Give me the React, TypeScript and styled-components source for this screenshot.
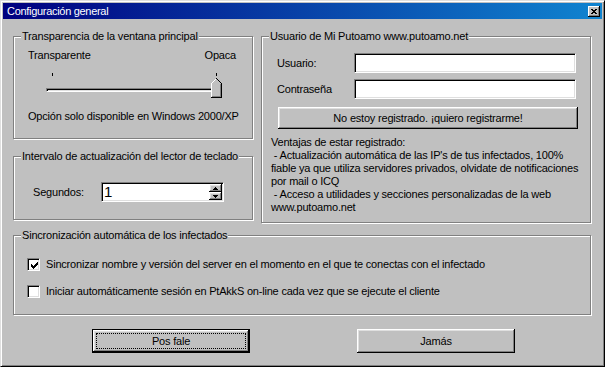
import React from "react";
import styled, { createGlobalStyle, css } from "styled-components";

const GlobalStyle = createGlobalStyle`
  html, body { margin: 0; padding: 0; background: #c0c0c0; }
  *, *::before, *::after { box-sizing: border-box; }
`;

const FONT = `"Liberation Sans", Arial, sans-serif`;

const raised = css`
  background: #c0c0c0;
  box-shadow: inset -1px -1px #000, inset 1px 1px #fff, inset -2px -2px #808080,
    inset 2px 2px #dfdfdf;
`;

const sunken = css`
  border: 1px solid;
  border-color: #808080 #fff #fff #808080;
  box-shadow: inset 1px 1px #000, inset -1px -1px #dfdfdf;
  background: #fff;
`;

const Window = styled.div`
  width: 605px;
  height: 367px;
  display: flex;
  flex-direction: column;
  padding: 2px;
  background: #c0c0c0;
  border: 1px solid;
  border-color: #dfdfdf #000 #000 #dfdfdf;
  box-shadow: inset 1px 1px #fff, inset -1px -1px #808080;
  font-family: ${FONT};
  font-size: 11px;
  line-height: 13px;
  letter-spacing: -0.2px;
  white-space: nowrap;
  color: #000;
`;

const TitleBar = styled.div`
  flex: none;
  height: 16px;
  display: flex;
  align-items: center;
  justify-content: space-between;
  padding: 0 2px 0 4px;
  background: linear-gradient(to right, #000080, #1084d0);
  color: #fff;
`;

const TitleText = styled.span`
  font-size: 11px;
  letter-spacing: -0.3px;
`;

const CloseButton = styled.div`
  width: 12px;
  height: 11px;
  display: flex;
  align-items: center;
  justify-content: center;
  background: #c0c0c0;
  box-shadow: inset -1px -1px #000, inset 1px 1px #fff, inset -2px -2px #808080;
  svg { display: block; }
`;

const Body = styled.div`
  flex: 1;
  display: flex;
  flex-direction: column;
  padding: 11px 0 0 10px;
`;

const TopGrid = styled.div`
  display: grid;
  grid-template-columns: 240px 330px;
  column-gap: 8px;
  height: 193px;
`;

const LeftColumn = styled.div`
  display: flex;
  flex-direction: column;
  gap: 11px;
`;

const Group = styled.fieldset<{ $h: number }>`
  margin: 0;
  padding: 0;
  min-width: 0;
  height: ${(p) => p.$h}px;
  border: 1px solid #808080;
  box-shadow: inset 1px 1px #fff, 1px 1px #fff;
`;

const Legend = styled.legend`
  margin-left: 7px;
  padding: 0 1px;
  line-height: 13px;
  background: #c0c0c0;
`;

/* Transparency group */
const TransparencyBody = styled.div`
  display: flex;
  flex-direction: column;
  padding: 6px 16px 0 14px;
`;

const ScaleLabels = styled.div`
  display: flex;
  justify-content: space-between;
  height: 13px;
`;

const Slider = styled.div`
  position: relative;
  margin: 10px 0 0 18px;
  width: 176px;
  height: 26px;
`;

const Tick = styled.div`
  position: absolute;
  top: 1px;
  width: 1px;
  height: 3px;
  background: #000;
`;

const Track = styled.div`
  margin-top: 16px;
  width: 100%;
  height: 4px;
  border: 1px solid;
  border-color: #808080 #fff #fff #808080;
  box-shadow: inset 1px 1px #000, inset -1px -1px #dfdfdf;
`;

const Thumb = styled.svg`
  position: absolute;
  left: 165px;
  top: 6px;
`;

const Note = styled.div`
  margin-top: 12px;
`;

/* Interval group */
const IntervalBody = styled.div`
  display: flex;
  align-items: center;
  padding: 19px 0 0 19px;
`;

const FieldLabel = styled.span<{ $w: number }>`
  width: ${(p) => p.$w}px;
  flex: none;
`;

const SpinEdit = styled.div`
  ${sunken};
  width: 123px;
  height: 20px;
  display: flex;
  padding: 1px;
`;

const SpinValue = styled.span`
  flex: 1;
  padding-left: 1px;
  font-size: 15px;
  line-height: 16px;
  letter-spacing: 0;
`;

const SpinButtons = styled.div`
  width: 13px;
  display: flex;
  flex-direction: column;
`;

const SpinButton = styled.div`
  ${raised};
  flex: 1;
  display: flex;
  align-items: center;
  justify-content: center;
  svg { display: block; }
`;

/* User group */
const UserBody = styled.div`
  display: flex;
  flex-direction: column;
  padding: 10px 0 0 9px;
`;

const FormRow = styled.div<{ $gap: number }>`
  display: flex;
  align-items: center;
  margin: ${(p) => p.$gap}px 0 0 6px;
`;

const TextInput = styled.div`
  ${sunken};
  width: 222px;
  height: 20px;
`;

const PushButton = styled.button<{ $default?: boolean }>`
  ${raised};
  width: 158px;
  height: 24px;
  padding: 0;
  border: none;
  font: inherit;
  letter-spacing: inherit;
  color: #000;
  display: flex;
  align-items: center;
  justify-content: center;
  ${(p) =>
    p.$default &&
    css`
      border: 1px solid #000;
      padding: 3px;
      align-items: stretch;
      justify-content: stretch;
    `}
`;

const RegisterButton = styled(PushButton)`
  width: 300px;
  height: 22px;
  margin: 8px 0 0 7px;
`;

const FocusRect = styled.span`
  flex: 1;
  display: flex;
  align-items: center;
  justify-content: center;
  border: 1px dotted #000;
`;

const Info = styled.div`
  margin-top: 7px;
  white-space: pre;
`;

/* Sync group */
const SyncBody = styled.div`
  display: flex;
  flex-direction: column;
  gap: 14px;
  padding: 16px 0 0 13px;
`;

const CheckRow = styled.label`
  display: flex;
  align-items: center;
  height: 13px;
`;

const CheckBox = styled.span`
  ${sunken};
  width: 13px;
  height: 13px;
  flex: none;
  position: relative;
  svg { position: absolute; left: 2px; top: 2px; display: block; }
`;

const CheckText = styled.span`
  margin-left: 6px;
`;

const ButtonRow = styled.div`
  display: flex;
  gap: 107px;
  margin-top: 14px;
  padding-left: 79px;
`;

const CHECK_STARTS = [2, 3, 4, 3, 2, 1, 0];

const CheckMark = () => (
  <svg width="9" height="9" viewBox="0 0 9 9" shapeRendering="crispEdges">
    <path
      fill="#000"
      d={CHECK_STARTS.map((s, i) => `M${i + 1} ${s + 1}h1v3h-1z`).join(" ")}
    />
  </svg>
);

const CloseGlyph = () => (
  <svg width="6" height="5" viewBox="0 0 6 5" shapeRendering="crispEdges">
    <path
      fill="#000"
      d="M0 0h2v1h-2z M4 0h2v1h-2z M1 1h4v1h-4z M2 2h2v1h-2z M1 3h4v1h-4z M0 4h2v1h-2z M4 4h2v1h-2z"
    />
  </svg>
);

const Arrow = ({ up }: { up?: boolean }) => (
  <svg width="5" height="3" viewBox="0 0 5 3" shapeRendering="crispEdges">
    <path
      fill="#000"
      d={up ? "M2 0h1v1h1v1h1v1h-5v-1h1v-1h1z" : "M0 0h5v1h-1v1h-1v1h-1v-1h-1v-1h-1z"}
    />
  </svg>
);

export default function App() {
  return (
    <>
      <GlobalStyle />
      <Window>
        <TitleBar>
          <TitleText>Configuración general</TitleText>
          <CloseButton>
            <CloseGlyph />
          </CloseButton>
        </TitleBar>
        <Body>
          <TopGrid>
            <LeftColumn>
              <Group $h={109}>
                <Legend>Transparencia de la ventana principal</Legend>
                <TransparencyBody>
                  <ScaleLabels>
                    <span>Transparente</span>
                    <span>Opaca</span>
                  </ScaleLabels>
                  <Slider>
                    <Tick style={{ left: 6 }} />
                    <Tick style={{ left: 170 }} />
                    <Track />
                    <Thumb width="11" height="20" viewBox="0 0 11 20" shapeRendering="crispEdges">
                      <path d="M0 5 L5 0 L10 5 V19 H0 Z" fill="#c0c0c0" />
                      <path d="M0.5 19 V5.5 L5.5 0.5" stroke="#fff" fill="none" />
                      <path d="M5.5 0.5 L10.5 5.5 V19.5 H0" stroke="#000" fill="none" />
                      <path d="M9.5 6 V18.5 H1" stroke="#808080" fill="none" />
                    </Thumb>
                  </Slider>
                  <Note>Opción solo disponible en Windows 2000/XP</Note>
                </TransparencyBody>
              </Group>
              <Group $h={70}>
                <Legend>Intervalo de actualización del lector de teclado</Legend>
                <IntervalBody>
                  <FieldLabel $w={68}>Segundos:</FieldLabel>
                  <SpinEdit>
                    <SpinValue>1</SpinValue>
                    <SpinButtons>
                      <SpinButton>
                        <Arrow up />
                      </SpinButton>
                      <SpinButton>
                        <Arrow />
                      </SpinButton>
                    </SpinButtons>
                  </SpinEdit>
                </IntervalBody>
              </Group>
            </LeftColumn>
            <Group $h={193}>
              <Legend>Usuario de Mi Putoamo www.putoamo.net</Legend>
              <UserBody>
                <FormRow $gap={0}>
                  <FieldLabel $w={77}>Usuario:</FieldLabel>
                  <TextInput />
                </FormRow>
                <FormRow $gap={6}>
                  <FieldLabel $w={77}>Contraseña</FieldLabel>
                  <TextInput />
                </FormRow>
                <RegisterButton>No estoy registrado. ¡quiero registrarme!</RegisterButton>
                <Info>
                  {"Ventajas de estar registrado:\n - Actualización automática de las IP's de tus infectados, 100%\nfiable ya que utiliza servidores privados, olvidate de notificaciones\npor mail o ICQ\n - Acceso a utilidades y secciones personalizadas de la web\nwww.putoamo.net"}
                </Info>
              </UserBody>
            </Group>
          </TopGrid>
          <Group $h={86} style={{ marginTop: 6, width: 578 }}>
            <Legend>Sincronización automática de los infectados</Legend>
            <SyncBody>
              <CheckRow>
                <CheckBox>
                  <CheckMark />
                </CheckBox>
                <CheckText>
                  Sincronizar nombre y versión del server en el momento en el que te conectas con el infectado
                </CheckText>
              </CheckRow>
              <CheckRow>
                <CheckBox />
                <CheckText>
                  Iniciar automáticamente sesión en PtAkkS on-line cada vez que se ejecute el cliente
                </CheckText>
              </CheckRow>
            </SyncBody>
          </Group>
          <ButtonRow>
            <PushButton $default>
              <FocusRect>Pos fale</FocusRect>
            </PushButton>
            <PushButton>Jamás</PushButton>
          </ButtonRow>
        </Body>
      </Window>
    </>
  );
}
